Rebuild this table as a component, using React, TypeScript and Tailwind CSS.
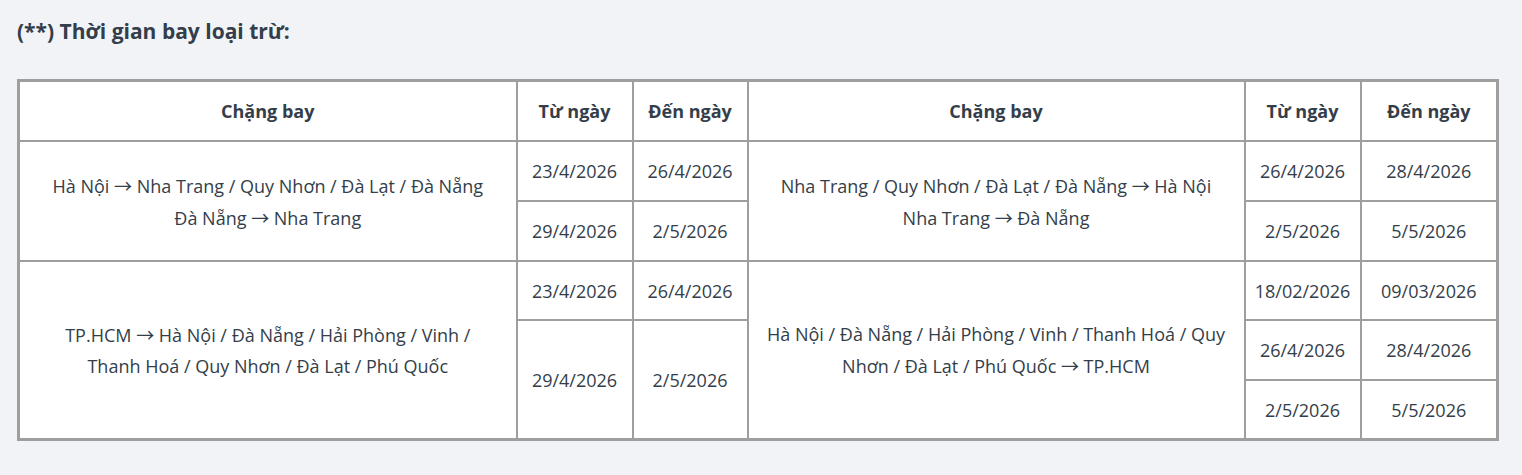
import React from "react";

const cell = "border-2 border-[#9e9e9e] text-center align-middle pt-[2px]";
const Arrow = () => (
  <span style={{ fontFamily: '"Noto Sans CJK JP", "DejaVu Sans", sans-serif' }}>→</span>
);

export default function App() {
  return (
    <div
      className="min-h-[475px] bg-[#f2f3f7] pl-[17px] pt-[17px] text-[#333e4a]"
      style={{ fontFamily: '"Open Sans", "Noto Sans", sans-serif' }}
    >
      <div className="text-[21px] font-bold leading-[29px]">(**) Thời gian bay loại trừ:</div>
      <table className="mt-[33px] w-[1479px] table-fixed border-collapse border-[3px] border-[#9e9e9e] bg-white text-[18px]">
        <colgroup>
          <col className="w-[498px]" />
          <col className="w-[116px]" />
          <col className="w-[115px]" />
          <col className="w-[497px]" />
          <col className="w-[116px]" />
          <col className="w-[137px]" />
        </colgroup>
        <thead>
          <tr className="h-[60px] font-bold">
            <th className={cell}>Chặng bay</th>
            <th className={cell}>Từ ngày</th>
            <th className={cell}>Đến ngày</th>
            <th className={cell}>Chặng bay</th>
            <th className={cell}>Từ ngày</th>
            <th className={cell}>Đến ngày</th>
          </tr>
        </thead>
        <tbody className="leading-[31px]">
          <tr className="h-[60px]">
            <td rowSpan={2} className={`${cell} px-[20px]`}>
              Hà Nội <Arrow /> Nha Trang / Quy Nhơn / Đà Lạt / Đà Nẵng
              <br />
              Đà Nẵng <Arrow /> Nha Trang
            </td>
            <td className={cell}>23/4/2026</td>
            <td className={cell}>26/4/2026</td>
            <td rowSpan={2} className={`${cell} px-[14px]`}>
              Nha Trang / Quy Nhơn / Đà Lạt / Đà Nẵng <Arrow /> Hà Nội
              <br />
              Nha Trang <Arrow /> Đà Nẵng
            </td>
            <td className={cell}>26/4/2026</td>
            <td className={cell}>28/4/2026</td>
          </tr>
          <tr className="h-[60px]">
            <td className={cell}>29/4/2026</td>
            <td className={cell}>2/5/2026</td>
            <td className={cell}>2/5/2026</td>
            <td className={cell}>5/5/2026</td>
          </tr>
          <tr className="h-[59px]">
            <td rowSpan={3} className={`${cell} px-[20px]`}>
              TP.HCM <Arrow /> Hà Nội / Đà Nẵng / Hải Phòng / Vinh / Thanh Hoá / Quy Nhơn / Đà Lạt / Phú Quốc
            </td>
            <td className={cell}>23/4/2026</td>
            <td className={cell}>26/4/2026</td>
            <td rowSpan={3} className={`${cell} px-[14px]`}>
              Hà Nội / Đà Nẵng / Hải Phòng / Vinh / Thanh Hoá / Quy Nhơn / Đà Lạt / Phú Quốc <Arrow /> TP.HCM
            </td>
            <td className={cell}>18/02/2026</td>
            <td className={cell}>09/03/2026</td>
          </tr>
          <tr className="h-[60px]">
            <td rowSpan={2} className={cell}>29/4/2026</td>
            <td rowSpan={2} className={cell}>2/5/2026</td>
            <td className={cell}>26/4/2026</td>
            <td className={cell}>28/4/2026</td>
          </tr>
          <tr className="h-[60px]">
            <td className={cell}>2/5/2026</td>
            <td className={cell}>5/5/2026</td>
          </tr>
        </tbody>
      </table>
    </div>
  );
}
